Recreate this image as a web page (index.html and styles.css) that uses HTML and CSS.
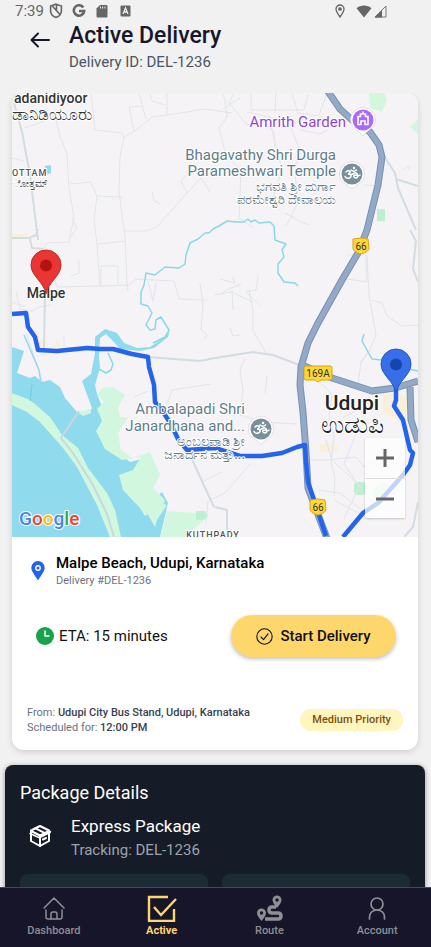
FILE: index.html
```html
<!DOCTYPE html>
<html lang="en">
<head>
<meta charset="utf-8">
<meta name="viewport" content="width=device-width, initial-scale=1">
<title>Active Delivery</title>
<link rel="stylesheet" href="styles.css">
</head>
<body>
<div class="app">
  <div class="status">
    <div class="status-group">
      <span class="clock">7:39</span>
      <svg width="14" height="16" viewBox="0 0 14 16" fill="none" stroke="#666" stroke-width="1.6"><path d="M7 1.2 12.4 3v5c0 3-2.200 5.300-5.400 6.500C3.800 13.300 1.600 11 1.600 8V3zM3.500 3.200 11.500 12M7.500 2v5"/></svg>
      <svg class="gap-g" width="14" height="14" viewBox="0 0 14 14" fill="none" stroke="#666" stroke-width="2.600"><path d="M11.300 3.500A5.200 5.200 0 1 0 12.200 7H7"/></svg>
      <svg class="gap-sd" width="12" height="14" viewBox="0 0 12 14"><path d="M4 1h6.500q1 0 1 1v10.500q0 1-1 1h-9q-1 0-1-1V4.500z" fill="#666"/><path d="M4.500 2.500v2M6.700 2.500v2M9 2.500v2" stroke="#eee"/></svg>
      <svg class="gap-a" width="11" height="12" viewBox="0 0 11 12"><rect x=".5" y=".5" width="10" height="11" rx="1" fill="#666"/><path d="m3 9 2.500-6L8 9M4 7h3" stroke="#eee" stroke-width="1.300" fill="none"/></svg>
    </div>
    <div class="status-group status-right">
      <svg width="10" height="14" viewBox="0 0 10 14" fill="none" stroke="#666" stroke-width="1.300"><path d="M5 13C2.500 9.500 1 7.300 1 5a4 4 0 0 1 8 0c0 2.300-1.500 4.500-4 8z"/><circle cx="5" cy="5" r="1.200" fill="#666"/></svg>
      <svg class="gap-wifi" width="16" height="13" viewBox="0 0 16 13"><path d="M8 12.500.5 3.300C4.500-.3 11.500-.3 15.500 3.300z" fill="#666"/></svg>
      <svg class="gap-cell" width="13" height="13" viewBox="0 0 13 13"><path d="M12 1v11H1z" fill="none" stroke="#777"/><path d="M8 5v7.500H.5z" fill="#666"/></svg>
    </div>
  </div>

  <header class="header">
    <button class="back" aria-label="Back"><svg width="20" height="16" viewBox="0 0 20 16" fill="none" stroke="#17172b" stroke-width="2" stroke-linecap="round" stroke-linejoin="round"><path d="M19 8H2M8 1.500 1.500 8 8 14.500"/></svg></button>
    <div>
      <h1 class="title">Active Delivery</h1>
      <p class="subtitle">Delivery ID: DEL-1236</p>
    </div>
  </header>

  <main class="content">
    <section class="card">
      <div class="map">
        <svg class="map-art" viewBox="12 93 406 444" preserveAspectRatio="xMidYMid slice" role="img" aria-label="Delivery route map">
          <defs>
            <g id="om" fill="none" stroke="#fff" stroke-width="1.500" stroke-linecap="round"><path d="M-6-2c2-2 5-1 4 .500C-2.500 0-4 0-4 0c3 0 4 1.500 2.500 3.200S-6 4.500-7 2.500M-1.500.500C1 1 2-2 4-1s2.500 5 0 5-3-3-1-3 3 2 5 0M-1-4c1.500 1.500 4 1.500 5.500 0"/><circle cx="2" cy="-6" r=".5"/></g>
            <g id="temple"><path d="M-12.500 0a12.500 12.500 0 1 1 25 0c0 6-4 8.500-7.500 11L0 15l-5-4c-3.500-2.500-7.500-5-7.500-11z" fill="#fff" stroke="#d5d5d8" stroke-width=".7"/><circle r="10.500" fill="#78909c"/><use href="#om"/></g>
            <path id="pin" d="M0 27C-2 15-15 9-15-2a15 15 0 0 1 30 0C15 9 2 15 0 27z"/>
          </defs>
          <rect x="12" y="93" width="406" height="444" fill="#f5f3f5"/>
          <path d="M369 93h15l3 7-5 12-12-4zM410 127l8-8v15zM373 490l8-8 8 3-6 9-10 7z" fill="#d2f7df"/>
          <g fill="#bdf0d0"><rect x="377" y="209" width="8" height="12"/><rect x="354" y="482" width="12" height="13" rx="4"/></g>
          <path d="M383 393h18l7 6v14l-9 7-17-7zM320 445l8-2 10 3v6h-18zM12 234h16l-2 4-14-1zM53 344l6-3 2 6h-8zM38 339l8-3 2 12h-9z" fill="#f9f0dc"/>

          <g fill="none" stroke="#e0e5e9" stroke-width="1" stroke-linejoin="round">
            <path d="M55 116l5 20 7 18 2 34 5 30-4 17-1 10M24 128l13-4 13-6M12 158l12 3M91 93l4 37 27 3 2 4 11-6 17-14 29-4 23-4 28 4M124 137l-4 20-1 35 6 45 2 45 1 9M139 93l7 26M150 93l2 8 13 4M167 93v22M129 107l14-1M129 107l5 24M70 184l21-2 6 14 25 1M97 196l-3 23 3 25 3 42M98 244l27-3M72 218l5 10-7 10M125 231h22l10-4 30-34 14-15 10 15M187 193l-6-12 8-9M152 191l2 10 6 3"/>
            <path d="M101 286v-20h17v20M101 286l28-1 7-6 38 2 5 18 28 1M68 242l-21 1-3 5M79 260v13l-8 3M16 291l4 18 12 2 7-4 12-2M55 280l2 7 44-1M148 281l5 20 3-18M200 283l3 22-2 25 6 5-3 4M64 335v12M12 302l13 5M26 333l7 20 10 30"/>
            <path d="M222 93l3 6 2 18-8 11 7 28 15 14-2 48 14 10M234 93l-5 10 18 22 15-5 12 12 1 15M240 98l-17 11M251 93v17h53l4-15M276 93l-1 20M292 93l6 20 20 3M270 122l12 48-10 30M286 114l13 35-4 24 3 30-12 23M300 130l20 4 7-4M327 93l-8 22 9 7M247 112l35 8M364 185l18 1M285 213l18 10 6 2M347 255h20l2 40 7 40-6 15-10 13M366 257l1 25-20-3M372 300l10 3 5 13 15 10 16-1M403 170l6-4v4"/>
            <path d="M222 293l9-5 10-4M220 279l15 4-3-6M258 276l-2 14-10 2 14 13M232 290l1 20M249 290l4 20v20l14 25M215 295l16-3 22 10M230 328l3 8 7-1M245 358l-5 12 3 20-3 25 23 7 34 2M267 376l-2 17M370 350l-9 13-3 20M322 384l10 10-3 23 5 20-3 25 4 16-1 18M306 460h20l30-3 8 10 22-10M326 440l6 20 28 26 15 22 24-20M357 431l-13 33 15 22M318 490l22 3 33 26M334 500l37 20M359 486l-15 33M251 463l-26 30-17 8-2 22M167 404l5-14 39-6M134 397l14-6M202 482l20-10M343 418l16-9"/>
          </g>
          <g fill="none" stroke="#d3dce2" stroke-width="3" stroke-linejoin="round"><path d="M14 103l8 29 8 43 8 65M12 238h17l7-3 2-6M30 239l2 9 12 1M45 293l-1 56M148 357l52 4 15-3 38-6 20 3 29 11M382 153l13 20 3 15 18 42M396 179l22 7M410 230l6 11-3 28 5 13M191 457l10 22 13 28M215 507l12 3v27M404 537l9-10 5-25" stroke-width="2"/></g>
          <g fill="#90daee">
            <path d="M12 347 24 351 17 373 30 378 35 376 42 382 50 380 60 387 65 398 77 412 88 414 92 408 82 381 91 374 95 353 95 337 105 329 117 333 124 343 137 348 150 347 165 337 170 330 168 337 154 348 140 351 120 349 112 340 106 334 100 338 99 357 100 368 95 385 97 394 104 412 104 438 118 452 130 462 150 457 143 472 129 475 131 490 147 506 162 492 168 503 160 537 12 537z"/>
            <path d="M45 166l6-1v8l-5 2z"/>
          </g>
          <g fill="#d2f7df">
            <path d="M12 393l18 7 20 17 12 18 16 13 10 20 19 25 8 17 6 27h-11l-13-32-20-38-14-19-23-26-13-10-15-7zM97 394l6-6 10-1 12 8-7 12 2 10 8 1-10 15 3 17 12 8 17-6 10 23-7 13 12 12-3 8h-4l-13 8-5-8-17-18-4-15 14-5 8-13-19 3-17-11-9-18 6-10-5-12 7-7zM77 412l14-3v4l-8 3zM147 513l14-10 6 2-10 15-2 7z"/>
            <path d="M167 511l29 2 12 4-24 20h-24z"/>
          </g>
          <path d="M196 511h9l3 5-5 4h-7z" fill="#bdf0d0"/>
          <path d="M79 411 61 438l12 15 20 32 14 29 7 23" fill="none" stroke="#c8d8dc" stroke-width="2"/>
          <path d="M24 335l15 35 2 14" fill="none" stroke="#90daee" stroke-width="1.500"/>
          <path d="M32 384l-2 17" fill="none" stroke="#6ccbe5"/>
          <g fill="none" stroke="#88d8ec" stroke-width="1.500" stroke-linejoin="round">
            <path d="M213 229l-4 4-4 0-7 6-8 4-4 12-1 9-6 4-14-1-5 4-5 4-9-2-2 12-3 7v12l7 2 4 7-6 12 4 5 5-1 1-9 5-3 8 13-4 7-12 6M213 229l6-3 8-5 9 1h8l4-3 3 3 4-2 4 3 11-1 4 4 1 14 11 4-4 6 2 7-6 7v9l6 9 11 1 3 3M364 334l-2 7 10 18 9 1M409 369l9 2M108 353l5 11-2 6-5 3-7-4"/>
          </g>
          <g fill="none" stroke-linejoin="round">
            <g stroke="#7690b6" stroke-width="7"><path d="M327 90l13 19 12 11 18 12 9 13 3 12-4 28-11 45-9 23-16 27-24 43-10 20-7 24-1 18 3 27 3 40 2 36 20 53M302 365l30 13 40 13 23-3 23-7M410 387l1 33 7 22"/></g>
            <g stroke="#93a9c6" stroke-width="5"><path d="M327 90l13 19 12 11 18 12 9 13 3 12-4 28-11 45-9 23-16 27-24 43-10 20-7 24-1 18 3 27 3 40 2 36 20 53M302 365l30 13 40 13 23-3 23-7M410 387l1 33 7 22"/></g>
            <path d="M12 314l14-1 2 14 7 10 3 13 19 1 30-3 13 1 13 0 19 5 16 3 1 10 5 18 1 17 6 7 10 15 7 15 9 11 28-2 25 8h22l20-3 15-6 8-2 1 17 2 20 10 30 8 24M396 380v20l-2 6 9 14 7 30 3 3-3 12-7 10-25 28-15 10-20 24" stroke="#2463eb" stroke-width="4.500"/>
          </g>
          <g stroke="#dca316" fill="#fdd835"><path d="M353 239q8-2 15 0l1 9q0 4-8 6-8-2-8-6zM310 500q8-2 15 0l1 9q0 4-8 6-8-2-8-6zM306 366h24q2 0 2 2v10q0 2-2 2h-9l-3 2-3-2h-9q-2 0-2-2v-10q0-2 2-2z"/></g>
          <g class="label shield"><text x="361" y="250">66</text><text x="318" y="511">66</text><text x="318" y="377">169A</text></g>

          <g class="label town"><text x="14" y="103" class="start">adanidiyoor</text><text x="12" y="120" class="start kn">ಡಾನಿಡಿಯೂರು</text><text x="46" y="298">Malpe</text></g>
          <g class="label suburb"><text x="12" y="176" class="start">OTTAM</text><text x="12" y="187" class="start kn">ೋತ್ತಮ್</text><text x="213" y="538">KUTHPADY</text></g>
          <text class="label end garden" x="346" y="127">Amrith Garden</text>
          <g class="label end poi"><text x="336" y="160">Bhagavathy Shri Durga</text><text x="336" y="176">Parameshwari Temple</text><text x="336" y="191" class="small">ಭಗವತಿ ಶ್ರೀ ದುರ್ಗಾ</text><text x="336" y="204" class="small">ಪರಮೇಶ್ವರಿ ದೇವಾಲಯ</text>
          <text x="245" y="414">Ambalapadi Shri</text><text x="245" y="431">Janardhana and...</text><text x="245" y="446" class="small">ಅಂಬಲಪಾಡಿ ಶ್ರೀ</text><text x="245" y="459" class="small">ಜನಾರ್ದನ ಮತ್ತು...</text></g>
          <g class="label city"><text x="352" y="410">Udupi</text><text x="352" y="433" class="kn">ಉಡುಪಿ</text></g>
          <use href="#temple" x="352" y="174"/><use href="#temple" x="261" y="429"/>
          <path d="M350.500 120a12.500 12.500 0 1 1 25 0c0 5-4 8-7.500 11l-5 5-5-5c-3.500-3-7.500-6-7.500-11z" fill="#fff" stroke="#d5d5d8" stroke-width=".7"/><circle cx="363" cy="120" r="10.500" fill="#ac68fb"/><path d="M358 116.500h2.500V114h5v2.500h2.500v8h-3v-3.500h-4v3.500h-3zM363 114v-2.500" fill="none" stroke="#fff" stroke-width="1.600"/>
          <use href="#pin" x="46" y="267" fill="#e93634" stroke="#bf2724"/><circle cx="46" cy="265.500" r="6" fill="#b31412"/>
          <use href="#pin" x="396" y="366" fill="#386fe9" stroke="#2558c5"/><circle cx="396" cy="364.500" r="6" fill="#1745ad"/>
          <text class="google" x="19" y="525"><tspan fill="#4285f4">G</tspan><tspan fill="#ea4335">o</tspan><tspan fill="#fbbc04">o</tspan><tspan fill="#4285f4">g</tspan><tspan fill="#34a853">l</tspan><tspan fill="#ea4335">e</tspan></text>
        </svg>
        <div class="zoom">
          <button aria-label="Zoom in"><svg width="18" height="18" viewBox="0 0 18 18"><path d="M9 0v18M0 9h18" stroke="#666" stroke-width="3"/></svg></button>
          <button aria-label="Zoom out"><svg width="18" height="18" viewBox="0 0 18 18"><path d="M0 9h18" stroke="#666" stroke-width="3"/></svg></button>
        </div>
      </div>

      <div class="destination">
        <svg width="14" height="20" viewBox="0 0 14 20"><path d="M7 19.500C4 14.500.3 10.500.3 6.800a6.700 6.700 0 0 1 13.400 0c0 3.700-3.700 7.700-6.700 12.700z" fill="#2463eb"/><circle cx="7" cy="7" r="2.200" fill="none" stroke="#fff" stroke-width="1.400"/></svg>
        <div>
          <h2 class="place">Malpe Beach, Udupi, Karnataka</h2>
          <p class="number">Delivery #DEL-1236</p>
        </div>
      </div>

      <div class="action">
        <p class="eta"><svg width="18" height="18" viewBox="0 0 18 18"><circle cx="9" cy="9" r="9" fill="#17a34a"/><path d="M9 3.500V9h4.500" fill="none" stroke="#fff" stroke-width="1.500"/></svg>ETA: 15 minutes</p>
        <button class="start-btn"><svg width="17" height="17" viewBox="0 0 17 17" fill="none" stroke="#111" stroke-width="1.100" stroke-linecap="round" stroke-linejoin="round"><circle cx="8.500" cy="8.500" r="7.700"/><path d="m5 9 2.500 2.600L12 5.800"/></svg>Start Delivery</button>
      </div>

      <div class="meta">
        <div class="meta-text">
          <p>From: <strong>Udupi City Bus Stand, Udupi, Karnataka</strong></p>
          <p>Scheduled for: <strong>12:00 PM</strong></p>
        </div>
        <span class="priority">Medium Priority</span>
      </div>
    </section>

    <section class="package">
      <h2 class="package-title">Package Details</h2>
      <div class="package-row">
        <svg width="24" height="24" viewBox="0 0 24 24" fill="none" stroke="#fff" stroke-width="2" stroke-linejoin="round" stroke-linecap="round"><path d="M12 2 21 6.500v10.500L12 22 3 17V6.500z"/><path d="M3 7l9 4.500L21 7M12 11.500V22M7.500 4.300l9 4.500M15 15.500l3-1.500"/><path d="M2 9.500 12 14" stroke-width="1.500"/><path d="m12.500 12.500 9-4.500" stroke-width="3"/></svg>
        <div>
          <h3 class="package-name">Express Package</h3>
          <p class="tracking">Tracking: DEL-1236</p>
        </div>
      </div>
      <div class="tiles"><div class="tile"></div><div class="tile"></div></div>
    </section>
  </main>

  <nav class="nav">
    <a href="#dashboard"><svg width="28" height="28" viewBox="0 0 28 28" fill="none" stroke="currentColor" stroke-width="1.500" stroke-linecap="round" stroke-linejoin="round"><path d="M4 14 14 4l10 10M6 16v7q0 2 2 2h12q2 0 2-2v-7M11 25v-5q0-2 2-2h2q2 0 2 2v5"/></svg>Dashboard</a>
    <a href="#active" class="on"><svg width="30" height="28" viewBox="0 0 30 28" fill="none" stroke="currentColor" stroke-width="2.400"><path d="M21 3H2v24h25V15M7 13l7 8L29 5"/></svg>Active</a>
    <a href="#route"><svg width="28" height="28" viewBox="0 0 28 28" fill="none" stroke="currentColor"><path d="M10 25h13q3 0 3-3t-3-3h-6q-3 0-3-3t3-3h4" stroke-width="3.600"/><path d="M6.500 27C4 23.500 2 21.500 2 19a4.500 4.500 0 0 1 9 0c0 2.500-2 4.500-4.500 8zM22 14c-2.500-3.500-4.500-5.500-4.500-8a4.500 4.500 0 0 1 9 0c0 2.500-2 4.500-4.500 8z" fill="currentColor" stroke="none"/><g fill="#17152a" stroke="none"><circle cx="6.500" cy="19" r="1.700"/><circle cx="22" cy="6" r="1.700"/></g></svg>Route</a>
    <a href="#account"><svg width="28" height="28" viewBox="0 0 28 28" fill="none" stroke="currentColor" stroke-width="1.700" stroke-linecap="round"><circle cx="14" cy="10" r="6"/><path d="M6.500 25v-2c0-4 3-7 7.500-7s7.500 3 7.500 7v2"/></svg>Account</a>
  </nav>
</div>
</body>
</html>
```
FILE: styles.css
```css
* { box-sizing: border-box; }
body { margin: 0; background: #f1f1f1; font-family: Roboto, "Noto Sans", sans-serif; color: #111; }
h1, h2, h3, p { margin: 0; font-weight: 400; }
button { border: 0; padding: 0; background: none; font: inherit; color: inherit; cursor: pointer; }
svg { display: block; flex: none; }

.app { height: 100vh; display: flex; flex-direction: column; overflow: hidden; }
.status { display: flex; justify-content: space-between; padding: 0 44px 0 15px; height: 22px; color: #666; }
.status-group { display: flex; align-items: center; }
.clock { font-size: 15px; margin-right: 5px; }
.gap-g { margin-left: 9px; }
.gap-sd { margin-left: 10px; }
.gap-a { margin-left: 12px; }
.gap-wifi { margin-left: 11px; }
.gap-cell { margin-left: 2px; }

.header { display: flex; gap: 19px; padding: 0 30px; height: 71px; flex: none; }
.back { align-self: flex-start; margin-top: 10px; }
.title { font-size: 23px; line-height: 28px; font-weight: 500; color: #17172b; }
.subtitle { font-size: 15px; line-height: 20px; margin-top: 2px; color: #4b5563; }

.content { flex: 1; min-height: 0; overflow-y: auto; scrollbar-width: none; }
.card { margin: 0 13px 15px 12px; border-radius: 12px; background: #fff; box-shadow: 0 2px 6px rgba(0, 0, 0, .14); }
.map { position: relative; overflow: hidden; border-radius: 12px 12px 0 0; }
.map-art { width: 100%; height: auto; }
.zoom { position: absolute; right: 13px; bottom: 19px; width: 40px; background: rgba(255, 255, 255, .72); box-shadow: 0 1px 2px rgba(0, 0, 0, .2); }
.zoom button { display: flex; width: 40px; height: 40px; align-items: center; justify-content: center; }
.zoom button + button { border-top: 1px solid #ddd; }

.label { text-anchor: middle; paint-order: stroke; stroke: #fff; stroke-width: 2px; stroke-linejoin: round; font-size: 14px; }
.label.end { text-anchor: end; }
.label .start { text-anchor: start; }
.town { fill: #333; font-weight: 500; }
.town .kn { font-size: 17px; }
.suburb { fill: #555; font-size: 9px; font-weight: 500; letter-spacing: 1px; }
.suburb .kn { font-size: 10px; letter-spacing: 0; }
.garden { fill: #8b45d8; font-size: 15px; }
.poi { fill: #607d8b; font-size: 15px; }
.poi .small { font-size: 13px; font-weight: 500; }
.city { fill: #222; font-size: 21px; font-weight: 500; }
.city .kn { font-size: 25px; }
.shield { fill: #333; stroke: none; font-size: 10px; }
.google { font-size: 19px; font-weight: 500; paint-order: stroke; stroke: #fff; stroke-width: 2px; }

.destination { display: flex; align-items: center; gap: 11px; padding: 16px 19px 0; }
.place { font-size: 15px; line-height: 20px; font-weight: 500; color: #000; }
.number { font-size: 11px; line-height: 16px; color: #6b7280; }
.action { display: flex; align-items: center; justify-content: space-between; padding: 26px 22px 0 24px; }
.eta { display: flex; align-items: center; gap: 5px; font-size: 15px; }
.start-btn { display: flex; align-items: center; justify-content: center; gap: 7px; width: 165px; height: 42px; border-radius: 21px; background: #fed76c; font-size: 15px; font-weight: 500; box-shadow: 0 2px 4px rgba(0, 0, 0, .25); }
.meta { display: flex; align-items: center; justify-content: space-between; padding: 48px 15px 15px; }
.meta-text { font-size: 11px; line-height: 15px; color: #6b7280; }
.meta strong { font-weight: 500; color: #374151; }
.priority { padding: 3px 12px; border-radius: 11px; background: #fef6be; font-size: 11px; line-height: 16px; font-weight: 500; color: #854d0e; }

.package { margin: 0 6px 0 5px; padding: 15px 15px 40px; border-radius: 8px; background: #161c27; color: #fff; box-shadow: 0 1px 5px rgba(0, 0, 0, .4); }
.package-title { font-size: 18px; line-height: 26px; }
.package-row { display: flex; align-items: center; gap: 19px; padding: 8px 8px 0; }
.package-row svg { margin-bottom: 4px; }
.package-name { font-size: 17px; line-height: 24px; }
.tracking { font-size: 15px; line-height: 24px; color: #9ca3af; }
.tiles { display: grid; grid-template-columns: 1fr 1fr; gap: 14px; margin-top: 12px; }
.tile { height: 60px; border-radius: 8px; background: #1d2b36; }

.nav { display: grid; grid-template-columns: repeat(4, 1fr); flex: none; height: 60px; border-top: 1px solid #484854; background: #17152a; }
.nav a { display: flex; flex-direction: column; align-items: center; gap: 2px; padding-top: 6px; font-size: 11px; line-height: 14px; font-weight: 500; color: #8e8e93; text-decoration: none; }
.nav .on { color: #fed76c; font-weight: 700; }
```
